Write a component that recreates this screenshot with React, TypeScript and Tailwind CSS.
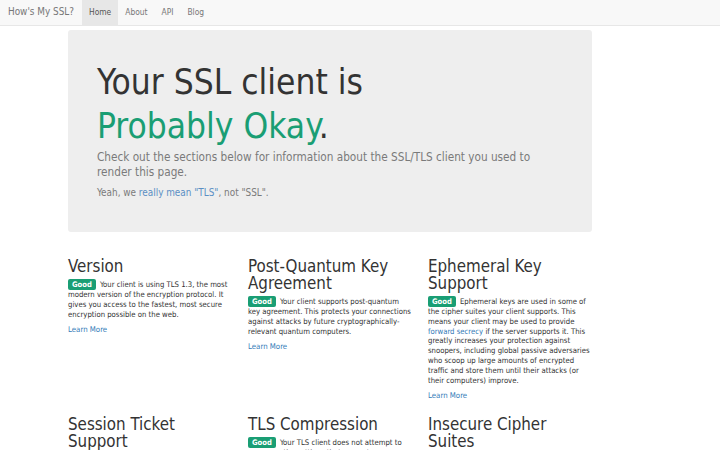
const sections = [
  {
    title: 'Version',
    rating: 'Good',
    body: (
      <>Your client is using TLS 1.3, the most modern version of the encryption protocol. It gives you access to the fastest, most secure encryption possible on the web.</>
    ),
  },
  {
    title: 'Post-Quantum Key Agreement',
    rating: 'Good',
    body: (
      <>Your client supports post-quantum key agreement. This protects your connections against attacks by future cryptographically-relevant quantum computers.</>
    ),
  },
  {
    title: 'Ephemeral Key Support',
    rating: 'Good',
    body: (
      <>
        Ephemeral keys are used in some of the cipher suites your client supports. This means your client may be used to provide{' '}
        <a href="#" className="text-[#337ab7]">forward secrecy</a> if the server supports it. This greatly increases your protection against snoopers, including global passive adversaries who scoop up large amounts of encrypted traffic and store them until their attacks (or their computers) improve.
      </>
    ),
  },
  {
    title: 'Session Ticket Support',
    rating: 'Good',
    body: <>Your client supports session tickets, letting it resume TLS sessions quickly.</>,
  },
  {
    title: 'TLS Compression',
    rating: 'Good',
    body: <>Your TLS client does not attempt to compress the settings that encrypt your connection, avoiding information leaks from the CRIME attack.</>,
  },
  {
    title: 'Insecure Cipher Suites',
    rating: 'Good',
    body: <>Your client doesn't use any cipher suites that are known to be insecure.</>,
  },
]

function Section({ title, rating, body }: { title: string; rating: string; body: React.ReactNode }) {
  return (
    <div className="w-[165px]">
      <h2 className="mb-[4px] text-[16.8px] leading-[17px] text-[#333]">{title}</h2>
      <p className="text-[7.7px] leading-[9.8px] text-[#333]">
        <span className="mr-[4px] inline-block rounded-[2px] bg-[#1a9e74] px-[4px] text-[7.6px] font-bold leading-[11px] text-white">
          {rating}
        </span>
        {body}
      </p>
      <a href="#" className="mt-[5px] block text-[7.8px] leading-[12px] text-[#337ab7]">Learn More</a>
    </div>
  )
}

export default function App() {
  return (
    <div className="min-h-[450px] bg-white font-['DejaVu_Sans_Condensed','DejaVu_Sans',sans-serif] text-[#333]">
      {/* Navbar */}
      <nav className="flex h-[26px] items-stretch border-b border-[#e7e7e7] bg-[#f8f8f8]">
        <a href="#" className="flex items-center pl-[8px] pr-[8px] text-[9.9px] text-[#777]">How's My SSL?</a>
        <a href="#" className="flex items-center bg-[#e7e7e7] px-[7px] text-[8.4px] text-[#555]">Home</a>
        <a href="#" className="flex items-center px-[7px] text-[8.4px] text-[#777]">About</a>
        <a href="#" className="flex items-center px-[7px] text-[8.4px] text-[#777]">API</a>
        <a href="#" className="flex items-center px-[7px] text-[8.4px] text-[#777]">Blog</a>
      </nav>

      <div className="ml-[68px] w-[524px]">
        {/* Jumbotron */}
        <div className="mt-[4px] rounded-[3px] bg-[#eee] px-[29px] pb-[33px] pt-[30px]">
          <h1 className="text-[35px] leading-[44px] text-[#333]">
            Your SSL client is
            <br />
            <span className="text-[#1a9e74]">Probably Okay</span>.
          </h1>
          <p className="mt-[2px] text-[11.7px] font-light leading-[15px] text-[#7a7a7a]">
            Check out the sections below for information about the SSL/TLS client you used to render this page.
          </p>
          <p className="mt-[7px] text-[9.9px] leading-[12px] text-[#7a7a7a]">
            Yeah, we <a href="#" className="text-[#5b8fc4]">really mean "TLS"</a>, not "SSL".
          </p>
        </div>

        {/* Sections */}
        <div className="mt-[26px] grid grid-cols-[165px_165px_165px] gap-x-[15px] gap-y-[14px]">
          {sections.map((s) => (
            <Section key={s.title} {...s} />
          ))}
        </div>
      </div>
    </div>
  )
}
